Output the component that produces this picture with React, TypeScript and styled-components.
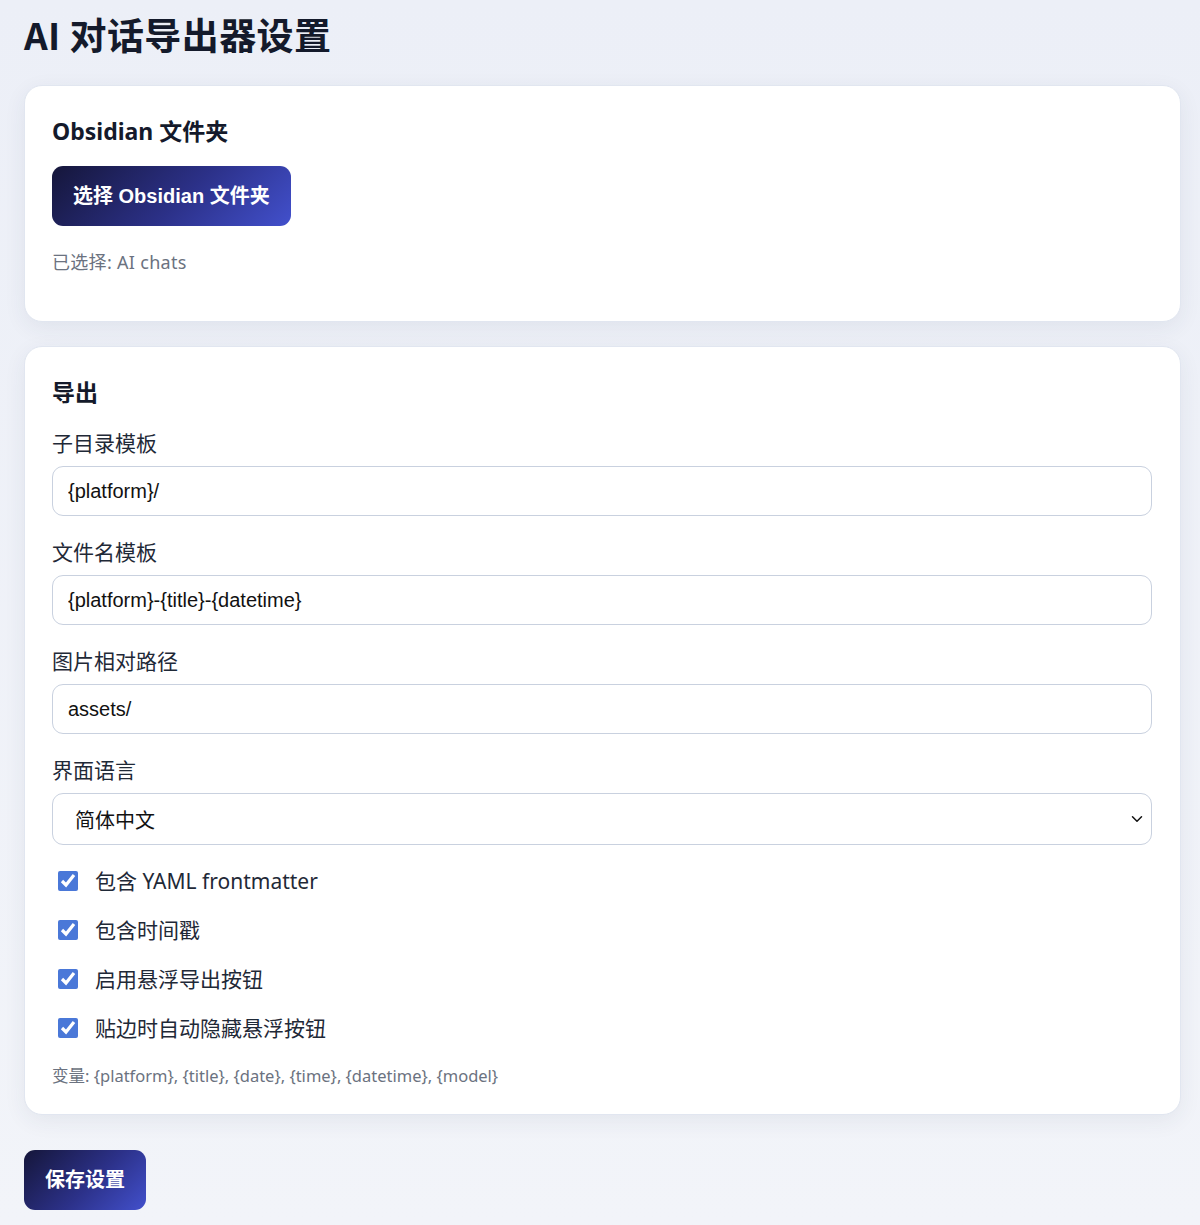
import React, { useState } from "react";
import styled, { createGlobalStyle } from "styled-components";
import { ChevronDown } from "lucide-react";

const GlobalStyle = createGlobalStyle`
  html, body {
    margin: 0;
    padding: 0;
  }
  body {
    min-height: 100vh;
    background: linear-gradient(180deg, #eceff7 0%, #f2f4f9 100%);
    font-family: "Noto Sans", "Noto Sans CJK SC", sans-serif;
    color: #1f2937;
  }
`;

const Page = styled.div`
  padding: 12px 19px 17px 24px;
`;

const Title = styled.h1`
  margin: 0 0 29px 0;
  font-family: "Noto Sans CJK SC", sans-serif;
  font-size: 37px;
  line-height: 44px;
  font-weight: 700;
  letter-spacing: 0.4px;
  color: #141a2b;
`;

const Card = styled.section`
  background: #fff;
  border: 1px solid #e1e6f0;
  border-radius: 18px;
  box-shadow: 0 6px 22px rgba(40, 52, 90, 0.07);
  padding: 27px 28px 26px 27px;
  margin-bottom: 24px;
`;

const CardTitle = styled.h2`
  margin: 0;
  font-size: 23px;
  line-height: 36px;
  font-weight: 700;
  color: #141a2b;
`;

const GradientButton = styled.button<{ $top?: number }>`
  display: block;
  margin-top: ${(p) => p.$top ?? 0}px;
  border: none;
  border-radius: 11px;
  padding: 16px 21px;
  font-family: "Liberation Sans", "Noto Sans CJK SC", sans-serif;
  font-size: 20px;
  line-height: 28px;
  font-weight: 700;
  color: #fff;
  background: linear-gradient(135deg, #15163a 0%, #2c3189 55%, #4250cc 100%);
  cursor: pointer;
`;

const Selected = styled.div`
  margin: 23px 0 20px 0;
  font-size: 18px;
  line-height: 26px;
  letter-spacing: 0.3px;
  color: #6b7280;
`;

const Field = styled.div`
  margin-top: 18px;
  & + & {
    margin-top: 21px;
  }
`;

const Label = styled.label`
  display: block;
  font-size: 21px;
  line-height: 30px;
  color: #1f2937;
  margin-bottom: 8px;
`;

const TextInput = styled.input`
  box-sizing: border-box;
  width: 100%;
  height: 50px;
  padding: 0 15px;
  border: 1.5px solid #c9d1df;
  border-radius: 11px;
  font-family: "Liberation Sans", Arial, sans-serif;
  font-size: 20px;
  color: #111;
  background: #fff;
  outline: none;
`;

const SelectWrap = styled.div`
  position: relative;
`;

const Select = styled.select`
  box-sizing: border-box;
  width: 100%;
  height: 52px;
  padding: 0 22px;
  border: 1.5px solid #c9d1df;
  border-radius: 11px;
  font-family: "Noto Sans CJK SC", sans-serif;
  font-size: 20px;
  color: #111;
  background: #fff;
  outline: none;
  appearance: none;
`;

const Arrow = styled(ChevronDown)`
  position: absolute;
  right: 6px;
  top: 17px;
  pointer-events: none;
  color: #111;
`;

const Checks = styled.div`
  display: flex;
  flex-direction: column;
  gap: 19px;
  margin-top: 21px;
`;

const CheckRow = styled.label`
  display: flex;
  align-items: center;
  gap: 17px;
  font-size: 21px;
  line-height: 30px;
  color: #1f2937;
`;

const Check = styled.input`
  width: 20px;
  height: 20px;
  margin: 0 0 0 6px;
  accent-color: #4a78d8;
`;

const Hint = styled.div`
  margin-top: 21px;
  font-size: 16.5px;
  line-height: 24px;
  color: #6b7280;
`;

const options = [
  "包含 YAML frontmatter",
  "包含时间戳",
  "启用悬浮导出按钮",
  "贴边时自动隐藏悬浮按钮",
];

export default function App() {
  const [subdir, setSubdir] = useState("{platform}/");
  const [filename, setFilename] = useState("{platform}-{title}-{datetime}");
  const [assets, setAssets] = useState("assets/");
  const [lang, setLang] = useState("zh-CN");
  const [checked, setChecked] = useState<boolean[]>([true, true, true, true]);

  return (
    <>
      <GlobalStyle />
      <Page>
        <Title>AI 对话导出器设置</Title>

        <Card>
          <CardTitle>Obsidian 文件夹</CardTitle>
          <GradientButton $top={17}>选择 Obsidian 文件夹</GradientButton>
          <Selected>已选择: AI chats</Selected>
        </Card>

        <Card>
          <CardTitle>导出</CardTitle>
          <Field>
            <Label>子目录模板</Label>
            <TextInput value={subdir} onChange={(e) => setSubdir(e.target.value)} />
          </Field>
          <Field>
            <Label>文件名模板</Label>
            <TextInput value={filename} onChange={(e) => setFilename(e.target.value)} />
          </Field>
          <Field>
            <Label>图片相对路径</Label>
            <TextInput value={assets} onChange={(e) => setAssets(e.target.value)} />
          </Field>
          <Field>
            <Label>界面语言</Label>
            <SelectWrap>
              <Select value={lang} onChange={(e) => setLang(e.target.value)}>
                <option value="zh-CN">简体中文</option>
                <option value="en">English</option>
              </Select>
              <Arrow size={18} strokeWidth={2} />
            </SelectWrap>
          </Field>
          <Checks>
            {options.map((text, i) => (
              <CheckRow key={text}>
                <Check
                  type="checkbox"
                  checked={checked[i]}
                  onChange={() =>
                    setChecked((prev) => prev.map((v, j) => (j === i ? !v : v)))
                  }
                />
                {text}
              </CheckRow>
            ))}
          </Checks>
          <Hint>变量: {"{platform}, {title}, {date}, {time}, {datetime}, {model}"}</Hint>
        </Card>

        <GradientButton $top={35}>保存设置</GradientButton>
      </Page>
    </>
  );
}
